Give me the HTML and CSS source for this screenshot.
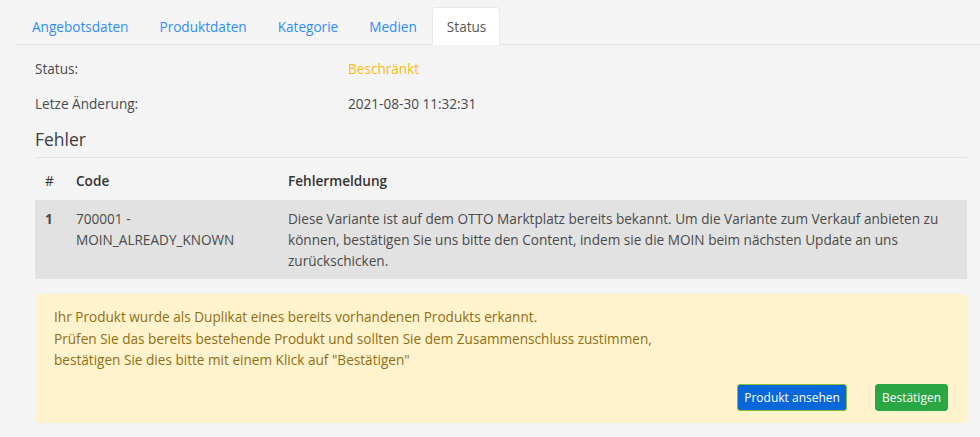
FILE: index.html
```html
<!DOCTYPE html>
<html lang="de">
<head>
    <meta charset="UTF-8">
    <meta name="viewport" content="width=device-width, initial-scale=1.0">
    <title>Produkt Status</title>
    <link rel="stylesheet" href="styles.css">
</head>
<body>
    <div class="page">
        <ul class="tabs">
            <li><a href="#">Angebotsdaten</a></li>
            <li><a href="#">Produktdaten</a></li>
            <li><a href="#">Kategorie</a></li>
            <li><a href="#">Medien</a></li>
            <li class="active"><a href="#">Status</a></li>
        </ul>

        <div class="content">
            <div class="info-row">
                <span class="label">Status:</span>
                <span class="value warn">Beschränkt</span>
            </div>
            <div class="info-row">
                <span class="label">Letze Änderung:</span>
                <span class="value">2021-08-30 11:32:31</span>
            </div>

            <h4 class="section-title">Fehler</h4>

            <table class="errors">
                <thead>
                    <tr>
                        <th class="col-nr">#</th>
                        <th class="col-code">Code</th>
                        <th>Fehlermeldung</th>
                    </tr>
                </thead>
                <tbody>
                    <tr>
                        <td class="col-nr"><b>1</b></td>
                        <td class="col-code">700001 -<br>MOIN_ALREADY_KNOWN</td>
                        <td>Diese Variante ist auf dem OTTO Marktplatz bereits bekannt. Um die Variante zum Verkauf anbieten zu können, bestätigen Sie uns bitte den Content, indem sie die MOIN beim nächsten Update an uns zurückschicken.</td>
                    </tr>
                </tbody>
            </table>

            <div class="alert">
                <p>Ihr Produkt wurde als Duplikat eines bereits vorhandenen Produkts erkannt.<br>
                Prüfen Sie das bereits bestehende Produkt und sollten Sie dem Zusammenschluss zustimmen,<br>
                bestätigen Sie dies bitte mit einem Klick auf "Bestätigen"</p>
                <div class="actions">
                    <button class="btn btn-blue">Produkt ansehen</button>
                    <button class="btn btn-green">Bestätigen</button>
                </div>
            </div>
        </div>
    </div>
</body>
</html>
```

FILE: styles.css
```css
* {
    box-sizing: border-box;
}

body {
    margin: 0;
    background-color: #f4f4f4;
    font-family: "Open Sans", "Noto Sans", sans-serif;
    font-size: 13.6px;
    color: #4a4a4a;
}

.page {
    padding: 7px 0 0 16px;
}

.tabs {
    list-style: none;
    margin: 0;
    padding: 0;
    display: flex;
    border-bottom: 1px solid #dfe2e5;
}

.tabs li {
    margin-bottom: -1px;
}

.tabs a {
    display: block;
    padding: 0 14px 0 15px;
    height: 38px;
    line-height: 37px;
    color: #2f8ef5;
    text-decoration: none;
    font-size: 13.6px;
    border: 1px solid transparent;
    border-radius: 4px 4px 0 0;
}

.tabs .active a {
    padding: 0 13px 0 14px;
    background-color: #fff;
    color: #555;
    border-color: #e5e7e9 #e5e7e9 #fff;
}

.content {
    padding: 0 13px 0 19px;
}

.info-row {
    display: flex;
    height: 35px;
    align-items: center;
}

.info-row:first-child {
    margin-top: 6px;
}

.label {
    width: 313px;
}

.warn {
    color: #f7bd12;
}

.section-title {
    margin: 6px 0 0;
    padding-bottom: 6px;
    font-size: 17.5px;
    font-weight: 500;
    color: #3d3d3d;
    border-bottom: 1px solid #e2e4e6;
}

.errors {
    width: 100%;
    border-collapse: collapse;
    margin-top: 2px;
}

.errors th {
    text-align: left;
    font-weight: 600;
    color: #333;
    height: 40px;
    padding: 0 10px;
}

.errors td {
    vertical-align: top;
    padding: 8px 10px;
    line-height: 21px;
    background-color: #e2e2e2;
}

.errors th.col-nr {
    font-weight: 400;
}

.col-nr {
    width: 41px;
}

.col-code {
    width: 202px;
    padding-left: 0 !important;
}

.alert {
    margin-top: 15px;
    background-color: #fff3cd;
    border-radius: 4px;
    padding: 12px 19px 12px 19px;
    color: #8f6e14;
}

.alert p {
    margin: 0;
    font-stretch: 94%;
    font-size: 13.6px;
    line-height: 21.5px;
}

.actions {
    display: flex;
    justify-content: flex-end;
    gap: 28px;
    margin-top: 13px;
}

.btn {
    font-family: "Open Sans", sans-serif;
    font-size: 12px;
    font-stretch: 88%;
    height: 27px;
    padding: 0 6px;
    color: #fff;
    border: 1px solid transparent;
    border-radius: 3px;
    cursor: pointer;
}

.btn-blue {
    background-color: #0767d8;
    border-color: #8cbf2f;
}

.btn-green {
    background-color: #29a745;
    border-color: #29a745;
}
```
